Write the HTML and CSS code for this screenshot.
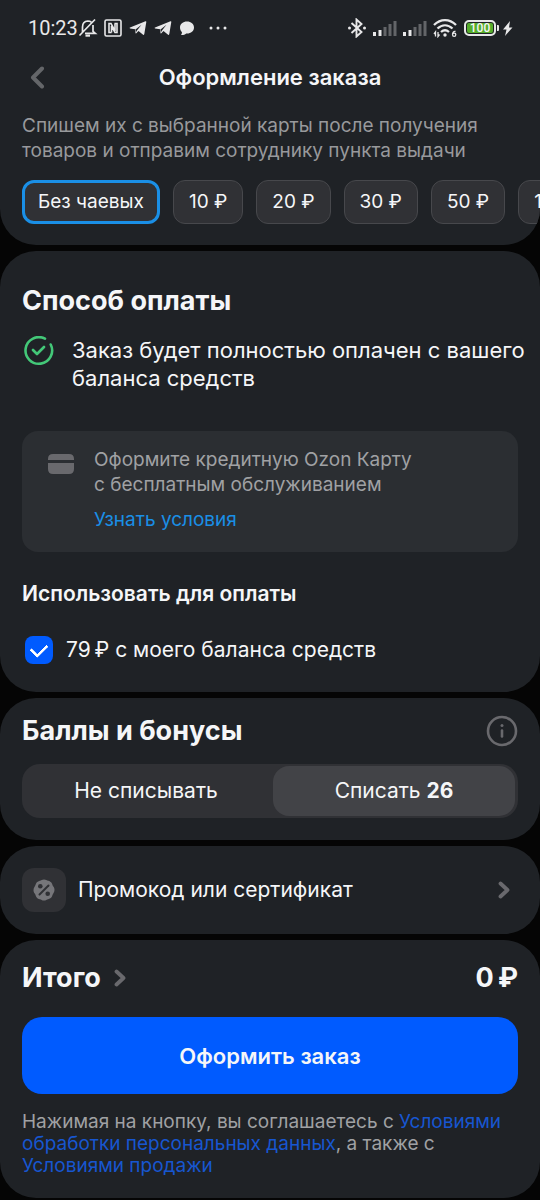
FILE: index.html
```html
<!DOCTYPE html>
<html lang="ru">
<head>
<meta charset="utf-8">
<meta name="viewport" content="width=device-width, initial-scale=1">
<title>Оформление заказа</title>
<link rel="stylesheet" href="styles.css">
</head>
<body>
<header class="top">
  <div class="status">
    <div class="status-group">
      <span class="clock">10:23</span>
      <svg width="20" height="20" viewBox="0 0 20 20" fill="none" stroke="#e8e8e9" stroke-width="1.700"><path d="M4.500 14.500V9c0-3.600 2-5.800 5.300-6 1.500 0 2.600.4 3.500 1.200M15 7v6.300l2.300 2H7M1.500 17.500 17 1.500"/><path d="M7.500 17.600h4.500" stroke-width="2.200"/></svg>
      <svg class="gap-s" width="18" height="18" viewBox="0 0 18 18" fill="none" stroke="#e8e8e9" stroke-width="1.600"><rect x="1" y="1" width="16" height="16" rx="1.500"/><path d="M7.500 13.500H5V4.500h2l4 7.500V4.500M10.500 4.500H13v9h-2L7.500 7v6.500"/></svg>
      <svg class="gap-m" width="18" height="18" viewBox="0 0 18 18"><path d="M1 8.600 16.500 2.200c.6-.2.900.1.800.7l-2 12.200c-.1.800-.6 1-1.200.6L9.500 12l-2.200 2.200c-.5.400-.8.200-.8-.3l-.3-3.600L1 9.400c-.6-.2-.6-.6 0-.8Z" fill="#e8e8e9"/><path d="m6.500 10.500 6-4.800-4.700 6-.8 1.500Z" fill="#1f2226"/></svg>
      <svg class="gap-m" width="18" height="18" viewBox="0 0 18 18"><path d="M1 8.600 16.500 2.200c.6-.2.900.1.800.7l-2 12.200c-.1.800-.6 1-1.200.6L9.500 12l-2.200 2.200c-.5.400-.8.200-.8-.3l-.3-3.600L1 9.400c-.6-.2-.6-.6 0-.8Z" fill="#e8e8e9"/><path d="m6.500 10.500 6-4.800-4.700 6-.8 1.500Z" fill="#1f2226"/></svg>
      <svg class="gap-m" width="16" height="16" viewBox="0 0 16 16" fill="#e8e8e9"><path d="M8 1.500c4 0 7 2.500 7 6s-3 6-7 6H7.200C5.800 14.600 4 15.300 2 15c.8-.8 1-1.800.9-2.900C1.700 11 1 9.400 1 7.500c0-3.500 3-6 7-6Z"/></svg>
      <svg class="gap-l" width="18" height="4" viewBox="0 0 18 4" fill="#e8e8e9"><circle cx="2" cy="2" r="1.500"/><circle cx="9" cy="2" r="1.500"/><circle cx="16" cy="2" r="1.500"/></svg>
    </div>
    <div class="status-group">
      <svg width="20" height="20" viewBox="0 0 20 20" fill="none" stroke="#e8e8e9" stroke-width="1.900"><path d="m4.500 5 10 9-5 4.500v-17l5 4.500-10 9"/><circle cx="2.500" cy="10" r="1.500" fill="#e8e8e9" stroke="none"/><circle cx="17.500" cy="10" r="1.500" fill="#e8e8e9" stroke="none"/></svg>
      <svg class="gap-s" width="24" height="16" viewBox="0 0 24 16"><path d="M0 12h3v4H0zM5.500 10h3v6h-3z" fill="#e8e8e9"/><path d="M10.500 7h3v9h-3zM15.500 4h3v12h-3zM20.500 1h3v15h-3z" fill="#636568"/></svg>
      <svg class="gap-s" width="24" height="16" viewBox="0 0 24 16"><path d="M0 12h3v4H0zM5.500 10h3v6h-3z" fill="#e8e8e9"/><path d="M10.500 7h3v9h-3zM15.500 4h3v12h-3zM20.500 1h3v15h-3z" fill="#636568"/></svg>
      <svg class="gap-s" width="24" height="20" viewBox="0 0 24 20" fill="none" stroke="#e8e8e9" stroke-width="2.300"><path d="M1 7c6.500-6.500 15.500-6.500 22 0M4.500 10.500c4.600-4.300 10.400-4.300 15 0M8 14c2.600-2.300 5.400-2.300 8 0"/><circle cx="12" cy="17" r="1.700" fill="#e8e8e9" stroke="none"/><path d="M2.500 18.500V14l-1.500 2M5 14v4.500L6.500 16.500M22.500 13.500c-2-.5-3 1-3 3 0 2.500 3.300 2.500 3.300 0 0-1.800-2.600-1.800-3.300-.3" stroke-width="1.300"/></svg>
      <span class="battery">100</span>
      <svg width="2" height="6" viewBox="0 0 2 6"><path d="M0 0h1q1 0 1 1v4q0 1-1 1H0Z" fill="#e8e8e9"/></svg>
      <svg class="gap-xs" width="11" height="15" viewBox="0 0 11 15" fill="#e8e8e9"><path d="M8 0 1 8.500h3.500L3 15l7.500-8.500H7Z"/></svg>
    </div>
  </div>
  <div class="titlebar">
    <button class="back" aria-label="Назад"><svg width="16" height="24" viewBox="0 0 16 24" fill="none" stroke="#646669" stroke-width="4" stroke-linecap="round" stroke-linejoin="round"><path d="M12 3.500 3 12.500l9 9"/></svg></button>
    <h1 class="title">Оформление заказа</h1>
  </div>
</header>
<main class="page">
  <section class="card tips">
    <p class="note">Спишем их с выбранной карты после получения товаров и отправим сотруднику пункта выдачи</p>
    <div class="chips">
      <button class="chip chip-on">Без чаевых</button>
      <button class="chip">10 ₽</button>
      <button class="chip">20 ₽</button>
      <button class="chip">30 ₽</button>
      <button class="chip">50 ₽</button>
      <button class="chip">100 ₽</button>
    </div>
  </section>
  <section class="card pay">
    <h2 class="heading">Способ оплаты</h2>
    <div class="paid">
      <svg class="icon" width="32" height="30" viewBox="0 0 32 30" fill="none" stroke="#43c878" stroke-width="2.600" stroke-linecap="round" stroke-linejoin="round"><path d="M23 2.700A13.300 13.300 0 1 0 28.700 8.500M11 14l4 4 7-7"/></svg>
      <p class="paid-text">Заказ будет полностью оплачен с вашего баланса средств</p>
    </div>
    <div class="offer">
      <svg class="icon" width="26" height="20" viewBox="0 0 26 20" fill="#69696d"><path d="M0 6V5q0-5 5-5h16q5 0 5 5v1ZM0 9h26v6q0 5-5 5H5q-5 0-5-5Z"/></svg>
      <div class="offer-body">
        <p>Оформите кредитную Ozon Карту<br>с бесплатным обслуживанием</p>
        <a class="offer-link" href="#">Узнать условия</a>
      </div>
    </div>
    <h3 class="subheading">Использовать для оплаты</h3>
    <label class="balance">
      <input class="check" type="checkbox" checked>
      <span>79&#8239;₽ с моего баланса средств</span>
    </label>
  </section>
  <section class="card bonus">
    <div class="row">
      <h2 class="heading">Баллы и бонусы</h2>
      <button class="info" aria-label="О баллах"><svg width="32" height="32" viewBox="0 0 32 32" fill="none" stroke="#69696d" stroke-width="2.600" stroke-linecap="round"><circle cx="16" cy="16" r="14"/><path d="M16 15.500v6"/><circle cx="16" cy="10.500" r="1.500" fill="#69696d" stroke="none"/></svg></button>
    </div>
    <div class="segment">
      <button class="option">Не списывать</button>
      <button class="option option-on">Списать <b>26</b></button>
    </div>
  </section>
  <a class="card promo" href="#">
    <span class="promo-icon"><svg width="22" height="22" viewBox="0 0 22 22"><path d="M11 0.500c2 0 2.700 1 4.200 1.300S18 3 18.800 4.300s.6 2 1.500 3.200 1.200 2.200 1.200 3.500-.4 2.300-1.200 3.500-.7 1.900-1.500 3.200-2 2.100-3.600 2.500-2.200 1.300-4.200 1.300-2.700-1-4.200-1.300-2.800-1.200-3.600-2.500-.6-2-1.500-3.200S.5 12.300.5 11s.4-2.300 1.200-3.500.7-1.900 1.500-3.200 2-2.100 3.600-2.500S9 .5 11 .5Z" fill="#76767a"/><g fill="#303135"><circle cx="7.300" cy="7.300" r="2.300"/><circle cx="14.700" cy="14.700" r="2.300"/></g><path d="m6.500 15.500 9-9" stroke="#303135" stroke-width="2" stroke-linecap="round"/></svg></span>
    <span class="promo-text">Промокод или сертификат</span>
    <svg width="12" height="18" viewBox="0 0 12 18" fill="none" stroke="#69696d" stroke-width="3.800" stroke-linecap="round" stroke-linejoin="round"><path d="m2.500 2.500 7 6.500-7 6.500"/></svg>
  </a>
  <section class="card total">
    <div class="row">
      <button class="total-toggle">Итого <svg width="12" height="18" viewBox="0 0 12 18" fill="none" stroke="#69696d" stroke-width="3.800" stroke-linecap="round" stroke-linejoin="round"><path d="m2.500 2.500 7 6.500-7 6.500"/></svg></button>
      <strong class="sum">0&#8239;₽</strong>
    </div>
    <button class="submit">Оформить заказ</button>
    <p class="legal">Нажимая на кнопку, вы соглашаетесь с <a href="#">Условиями обработки персональных данных</a>, а также с <br><a href="#">Условиями продажи</a></p>
  </section>
</main>
</body>
</html>
```
FILE: styles.css
```css
* { box-sizing: border-box; margin: 0; }
body { background: #050505; color: #f5f6f8; font-family: Inter, "Noto Sans", sans-serif; font-size: 21px; line-height: 28px; overflow-x: hidden; }
button { font: inherit; color: inherit; background: none; border: 0; padding: 0; }
a { text-decoration: none; color: inherit; }
svg { display: block; flex: none; }

.top { background: #1f2226; }
.status { display: flex; justify-content: space-between; padding: 16px 27px 0 28px; height: 55px; align-items: flex-start; }
.status-group { display: flex; align-items: center; height: 24px; }
.clock { font: 20px/24px Roboto, sans-serif; color: #e8e8e9; }
.gap-xs { margin-left: 3px; }
.gap-s { margin-left: 6px; }
.gap-m { margin-left: 7px; }
.gap-l { margin-left: 14px; }
.battery { width: 32px; height: 16px; margin: 0 1px 0 7px; border: 2px solid #e8e8e9; border-radius: 5px; background: #55ad2b; box-shadow: inset 0 0 0 1px #1f2226; font: 500 12px/12px Roboto, sans-serif; text-align: center; }
.titlebar { display: grid; grid-template-columns: 32px 1fr 32px; align-items: center; padding: 0 22px; height: 44px; }
.back { padding-left: 8px; }
.title { font-size: 22px; line-height: 28px; font-weight: 600; text-align: center; }

.page { display: flex; flex-direction: column; gap: 6px; }
.card { background: #1f2226; border-radius: 36px; padding: 0 22px; }
.heading { font-size: 27px; line-height: 32px; font-weight: 700; }
.row { display: flex; align-items: center; justify-content: space-between; }

.tips { border-radius: 0 0 36px 36px; padding-top: 14px; padding-bottom: 21px; overflow: hidden; }
.note { font-size: 19px; line-height: 25px; color: #98999c; }
.chips { display: flex; gap: 13px; margin-top: 17px; margin-right: -22px; overflow: hidden; }
.chip { flex: none; height: 44px; padding: 0 15px; border: 1px solid #47484c; border-radius: 12px; background: #303135; font-size: 19px; }
.chip-on { border: 3px solid #1a8fe6; padding: 0 13px; }

.pay { padding-top: 34px; padding-bottom: 28px; }
.paid { display: flex; gap: 18px; margin: 19px -8px 0 0; }
.paid-text { font-size: 22px; line-height: 28px; }
.offer { display: flex; gap: 20px; margin-top: 39px; padding: 16px 26px 20px; border-radius: 16px; background: #2b2e32; }
.offer .icon { margin-top: 7px; }
.offer-body { font-size: 19px; line-height: 25px; color: #a0a1a4; }
.offer-link { display: block; margin-top: 10px; color: #1a8fe6; }
.subheading { margin-top: 28px; font-size: 21px; line-height: 28px; font-weight: 600; }
.balance { display: flex; align-items: center; gap: 13px; margin-top: 28px; padding-left: 3px; }
.check { appearance: none; width: 28px; height: 28px; border-radius: 8px; background: #005bff; display: grid; place-items: center; }
.check::before { content: ""; width: 13px; height: 8px; border: solid #fff; border-width: 0 0 3px 3px; border-radius: 1px; transform: translateY(-2px) rotate(-45deg); }

.bonus { padding-top: 17px; padding-bottom: 22px; }
.segment { display: grid; grid-template-columns: 1fr 1fr; gap: 6px; margin-top: 17px; padding: 2px 3px; border-radius: 18px; background: #303135; }
.option { height: 50px; border-radius: 16px; }
.option-on { background: #424347; }

.promo { display: flex; align-items: center; gap: 12px; padding: 22px 30px 22px 22px; }
.promo-icon { display: grid; place-items: center; width: 44px; height: 44px; border-radius: 12px; background: #303135; }
.promo-text { flex: 1; }

.total { padding-top: 22px; padding-bottom: 21px; }
.total-toggle { display: flex; align-items: center; gap: 13px; font-size: 27px; line-height: 32px; font-weight: 700; }
.sum { font-size: 27px; line-height: 32px; }
.submit { display: block; width: 100%; height: 77px; margin-top: 23px; border-radius: 20px; background: #005bff; font-size: 22px; font-weight: 600; }
.legal { margin-top: 17px; font-size: 19px; line-height: 22px; color: #a0a1a4; }
.legal a { color: #1756d0; }
```
